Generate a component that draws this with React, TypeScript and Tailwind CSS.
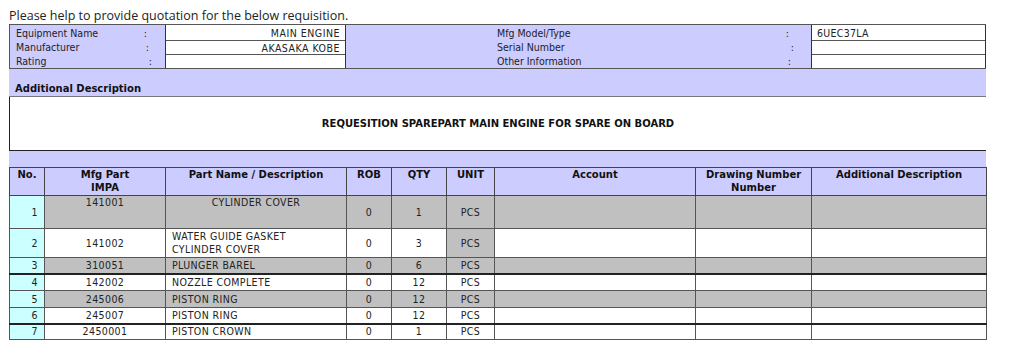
import React from "react"

const rows = [
  { no: "1", mfg: "141001", name: ["CYLINDER COVER"], rob: "0", qty: "1", unit: "PCS", bg: "bg-[#c0c0c0]", unitBg: "bg-[#c0c0c0]", h: "h-[33px]", top: true, thick: false },
  { no: "2", mfg: "141002", name: ["WATER GUIDE GASKET", "CYLINDER COVER"], rob: "0", qty: "3", unit: "PCS", bg: "bg-white", unitBg: "bg-[#c0c0c0]", h: "h-[29px]", top: false, thick: false },
  { no: "3", mfg: "310051", name: ["PLUNGER BAREL"], rob: "0", qty: "6", unit: "PCS", bg: "bg-[#c0c0c0]", unitBg: "bg-[#c0c0c0]", h: "h-[16px]", top: false, thick: true },
  { no: "4", mfg: "142002", name: ["NOZZLE COMPLETE"], rob: "0", qty: "12", unit: "PCS", bg: "bg-white", unitBg: "bg-white", h: "h-[17px]", top: false, thick: false },
  { no: "5", mfg: "245006", name: ["PISTON RING"], rob: "0", qty: "12", unit: "PCS", bg: "bg-[#c0c0c0]", unitBg: "bg-[#c0c0c0]", h: "h-[17px]", top: false, thick: false },
  { no: "6", mfg: "245007", name: ["PISTON RING"], rob: "0", qty: "12", unit: "PCS", bg: "bg-white", unitBg: "bg-white", h: "h-[16px]", top: false, thick: true },
  { no: "7", mfg: "2450001", name: ["PISTON CROWN"], rob: "0", qty: "1", unit: "PCS", bg: "bg-white", unitBg: "bg-white", h: "h-[16px]", top: false, thick: false },
]

const font = "font-['DejaVu_Sans_Condensed','Liberation_Sans',sans-serif]"
const bold = "font-['DejaVu_Sans','Liberation_Sans',sans-serif] font-bold text-[10px] text-[#111]"

export default function App() {
  return (
    <div className={`w-[1024px] h-[361px] bg-white overflow-hidden px-[9px] pt-[8px] text-[#222] ${font}`}>
      {/* heading */}
      <div className="h-[16px] text-[12.5px] leading-[16px] text-[#222] font-['Open_Sans',sans-serif]">
        Please help to provide quotation for the below requisition.
      </div>

      <div className="w-[977px] text-[10.5px]">
        {/* equipment info */}
        <div className="flex border-y border-l border-[#555] bg-[#ccccff]">
          <div className="w-[155px] flex flex-col">
            <div className="h-[15px] leading-[16px] flex justify-between pl-[6px] pr-[18px]"><span>Equipment Name</span><span>:</span></div>
            <div className="h-[14px] leading-[15px] flex justify-between pl-[6px] pr-[16px]"><span>Manufacturer</span><span>:</span></div>
            <div className="h-[14px] leading-[15px] flex justify-between pl-[6px] pr-[13px]"><span>Rating</span><span>:</span></div>
          </div>
          <div className="w-[181px] border-x border-[#333] bg-white flex flex-col tracking-[0.5px]">
            <div className="h-[15px] leading-[16px] text-right pr-[5px]">MAIN ENGINE</div>
            <div className="h-[14px] leading-[14px] border-t border-[#555] text-right pr-[5px]">AKASAKA KOBE</div>
            <div className="h-[14px] border-t border-[#555]"></div>
          </div>
          <div className="w-[465px] flex flex-col">
            <div className="h-[15px] leading-[16px] flex justify-between pl-[151px] pr-[22px]"><span>Mfg Model/Type</span><span>:</span></div>
            <div className="h-[14px] leading-[15px] flex justify-between pl-[151px] pr-[17px]"><span>Serial Number</span><span>:</span></div>
            <div className="h-[14px] leading-[15px] flex justify-between pl-[151px] pr-[20px]"><span>Other Information</span><span>:</span></div>
          </div>
          <div className="w-[175px] border-x border-[#333] bg-white flex flex-col">
            <div className="h-[15px] leading-[16px] pl-[5px] tracking-[0.3px]">6UEC37LA</div>
            <div className="h-[14px] border-t border-[#555]"></div>
            <div className="h-[14px] border-t border-[#555]"></div>
          </div>
        </div>

        {/* additional description */}
        <div className={`h-[28px] bg-[#ccccff] border-b border-[#777] flex items-end pl-[6px] pb-[1px] leading-[13px] ${bold}`}>
          Additional Description
        </div>
        <div className={`h-[54px] border-l border-b border-[#222] flex items-center justify-center ${bold}`}>
          REQUESITION SPAREPART MAIN ENGINE FOR SPARE ON BOARD
        </div>
        <div className="h-[16px] bg-[#ccccff]"></div>

        {/* items */}
        <table className="w-[977px] table-fixed border-collapse">
          <colgroup>
            <col className="w-[35px]" />
            <col className="w-[121px]" />
            <col className="w-[181px]" />
            <col className="w-[45px]" />
            <col className="w-[55px]" />
            <col className="w-[48px]" />
            <col className="w-[201px]" />
            <col className="w-[116px]" />
            <col className="w-[175px]" />
          </colgroup>
          <thead>
            <tr className={`bg-[#ccccff] leading-[13px] ${bold}`}>
              {["No.", "Mfg Part|IMPA", "Part Name / Description", "ROB", "QTY", "UNIT", "Account", "Drawing Number|Number", "Additional Description"].map((h) => (
                <th key={h} className="h-[28px] border border-[#444] align-top text-center pt-0 font-bold">
                  {h.split("|").map((l) => (
                    <div key={l}>{l}</div>
                  ))}
                </th>
              ))}
            </tr>
          </thead>
          <tbody className="leading-[13px] tracking-[0.4px]">
            {rows.map((r) => {
              const b = `border border-[#555] ${r.thick ? "border-b-2 border-b-[#222]" : ""}`
              return (
                <tr key={r.no} className={r.h}>
                  <td className={`${b} bg-[#ccffff] text-right pr-[6px]`}>{r.no}</td>
                  <td className={`${b} ${r.bg} text-center ${r.top ? "align-top" : ""}`}>{r.mfg}</td>
                  <td className={`${b} ${r.bg} ${r.top ? "align-top text-center" : "text-left pl-[6px]"}`}>
                    {r.name.map((n) => (
                      <div key={n}>{n}</div>
                    ))}
                  </td>
                  <td className={`${b} ${r.bg} text-center`}>{r.rob}</td>
                  <td className={`${b} ${r.bg} text-center`}>{r.qty}</td>
                  <td className={`${b} ${r.unitBg} text-center`}>{r.unit}</td>
                  <td className={`${b} ${r.bg}`}></td>
                  <td className={`${b} ${r.bg}`}></td>
                  <td className={`${b} ${r.bg}`}></td>
                </tr>
              )
            })}
          </tbody>
        </table>
      </div>
    </div>
  )
}
